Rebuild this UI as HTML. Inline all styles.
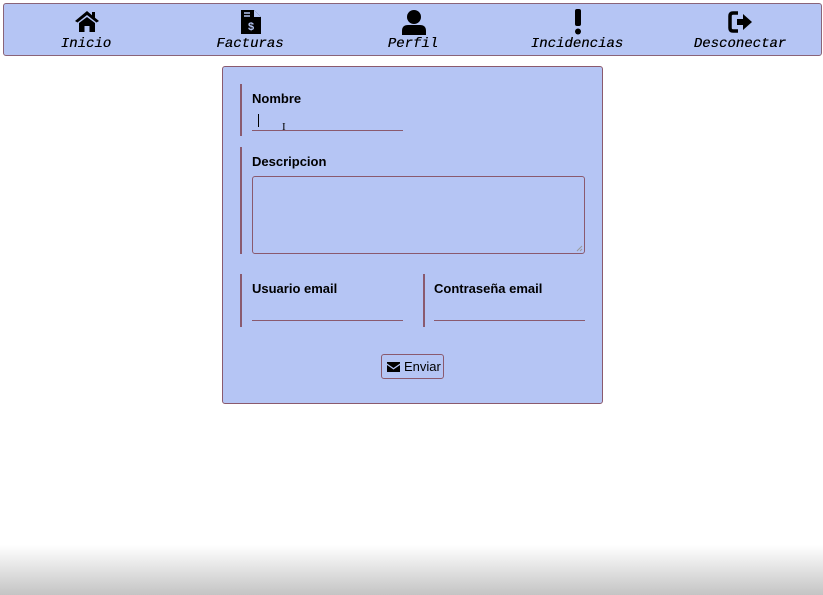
<!DOCTYPE html>
<html><head><meta charset="utf-8"><style>
*{box-sizing:border-box;margin:0;padding:0}
body{width:823px;height:595px;background:#fff;position:relative;overflow:hidden;font-family:"Liberation Sans",sans-serif}
.grad{position:absolute;left:0;right:0;top:545px;height:50px;background:linear-gradient(#fff,#c4c4c4)}
.nav{position:absolute;left:3px;top:3px;width:819px;height:53px;background:#b5c5f4;border:1.5px solid #8a6478;border-radius:3px}
.it{position:absolute;top:0;width:140px;margin-left:-70px;text-align:center}
.it svg{position:absolute;left:58px;top:5px}
.it span{position:absolute;left:0;right:0;top:32px;font:italic 14px "Liberation Mono",monospace;color:#000;text-shadow:0.2px 0 0 #000}
.card{position:absolute;left:222px;top:66px;width:381px;height:338px;background:#b5c5f4;border:1.5px solid #8a5a6e;border-radius:3px}
.bl{position:absolute;width:2px;background:#8a5a6e}
.lab{position:absolute;font-weight:bold;font-size:13px;color:#000}
.ul{position:absolute;height:1px;background:#8a5a6e}
.ta{position:absolute;left:252px;top:176px;width:333px;height:78px;border:1px solid #8a5a6e;border-radius:3px}
.btn{position:absolute;left:381px;top:354px;width:63px;height:25px;border:1px solid #8a5a6e;border-radius:3px;font-size:13px;line-height:23px;padding-left:22px}
</style></head><body>
<div class="grad"></div>
<div class="nav">
 <div class="it" style="left:82px"><svg width="26" height="24" viewBox="0 0 26 24"><path d="M13 2 L1 12 L3.5 13.5 L13 6 L22.5 13.5 L25 12 L21 8.7 V3 H18 V6.2 Z M5 14 L13 8 L21 14 V23 H15.5 V17 H10.5 V23 H5 Z" fill="#000"/></svg><span>Inicio</span></div>
 <div class="it" style="left:246px"><svg width="26" height="26" viewBox="0 0 26 26"><path d="M3 1 H16 L23 8 V25 H3 Z" fill="#000"/><path d="M16 1 V8 H23" fill="#b5c5f4"/><path d="M6 4h6M6 7h6" stroke="#b5c5f4" stroke-width="1.6"/><text x="13" y="21" font-size="11" font-weight="bold" text-anchor="middle" fill="#b5c5f4" font-family="Liberation Sans">$</text></svg><span>Facturas</span></div>
 <div class="it" style="left:409px"><svg width="26" height="26" viewBox="0 0 26 26"><circle cx="13" cy="8" r="7" fill="#000"/><path d="M1 26 V22 Q1 16 7 16 H19 Q25 16 25 22 V26 Z" fill="#000"/></svg><span>Perfil</span></div>
 <div class="it" style="left:573px"><svg width="26" height="26" viewBox="0 0 26 26"><rect x="10" y="0" width="6" height="17" rx="2" fill="#000"/><circle cx="13" cy="22.5" r="3" fill="#000"/></svg><span>Incidencias</span></div>
 <div class="it" style="left:736px"><svg width="26" height="26" viewBox="0 0 26 26"><path d="M10 4 H5 Q2 4 2 7 V19 Q2 22 5 22 H10" stroke="#000" stroke-width="3.5" fill="none"/><path d="M9 10 H15 V5 L24 13 L15 21 V16 H9 Z" fill="#000"/></svg><span>Desconectar</span></div>
</div>
<div class="card"></div>
<div class="bl" style="left:240px;top:84px;height:52px"></div>
<div class="lab" style="left:252px;top:91px">Nombre</div>
<div style="position:absolute;left:258px;top:114px;width:1px;height:13px;background:#000"></div>
<div style="position:absolute;left:282px;top:121px;font-size:11px;line-height:13px;font-family:'Liberation Serif',serif">I</div>
<div class="ul" style="left:252px;top:130px;width:151px"></div>
<div class="bl" style="left:240px;top:147px;height:107px"></div>
<div class="lab" style="left:252px;top:154px">Descripcion</div>
<div class="ta"></div>
<svg style="position:absolute;left:576px;top:245px" width="7" height="7"><path d="M6 1L1 6M6 4L4 6" stroke="#999" stroke-width="1"/></svg>
<div class="bl" style="left:240px;top:274px;height:53px"></div>
<div class="lab" style="left:252px;top:281px">Usuario email</div>
<div class="ul" style="left:252px;top:320px;width:151px"></div>
<div class="bl" style="left:423px;top:274px;height:53px"></div>
<div class="lab" style="left:434px;top:281px">Contraseña email</div>
<div class="ul" style="left:434px;top:320px;width:151px"></div>
<div class="btn"><svg style="position:absolute;left:5px;top:7px" width="13" height="10" viewBox="0 0 13 10"><path d="M0 0H13V1.5L6.5 6L0 1.5Z M0 3L6.5 7.5L13 3V10H0Z" fill="#000"/></svg>Enviar</div>
</body></html>
